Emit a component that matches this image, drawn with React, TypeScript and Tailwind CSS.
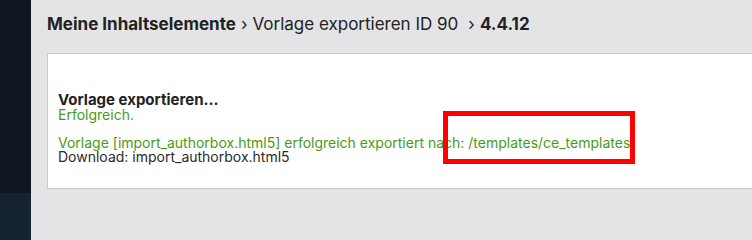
import React from 'react';

const font = { fontFamily: 'Inter, "Liberation Sans", Arial, sans-serif' };

export default function App() {
  return (
    <div className="flex h-screen min-h-[210px] w-full overflow-hidden bg-[#e4e4e6]" style={font}>
      {/* sidebar */}
      <div className="flex w-[31px] shrink-0 flex-col bg-[#0e1720]">
        <div className="h-[193px]" />
        <div className="flex-1 bg-[#15222f]" />
      </div>

      {/* main */}
      <div className="flex-1 pl-[16px]">
        <div className="flex h-[53px] items-center pb-[4px] text-[17px] text-[#222]">
          <span className="font-bold">Meine Inhaltselemente</span>
          <span className="mx-[5px]">›</span>
          <span>Vorlage exportieren ID 90</span>
          <span className="ml-[10px] mr-[5px]">›</span>
          <span className="font-bold">4.4.12</span>
        </div>

        <div className="relative -mr-[20px] h-[136px] border border-[#c9c9c9] bg-white px-[10px] pt-[38px] text-[14px] leading-[14px]">
          <h2 className="text-[15px] font-bold leading-[16px] text-[#222]">Vorlage exportieren...</h2>
          <p className="text-[#4a9a18]">Erfolgreich.</p>
          <p className="mt-[14px] text-[#4a9a18]">
            Vorlage [import_authorbox.html5] erfolgreich exportiert nach: /templates/ce_templates
          </p>
          <p className="text-[#2a2a2a]">Download: import_authorbox.html5</p>

          {/* annotation */}
          <div className="absolute left-[395px] top-[57px] h-[53px] w-[192px] border-[5px] border-[#ff0000]" />
        </div>
      </div>
    </div>
  );
}
